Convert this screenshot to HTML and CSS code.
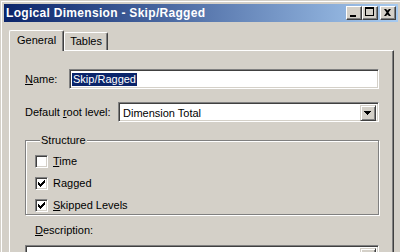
FILE: index.html
```html
<!DOCTYPE html>
<html lang="en">
<head>
  <meta charset="UTF-8">
  <title>Logical Dimension - Skip/Ragged</title>
  <link rel="stylesheet" href="styles.css">
</head>
<body>
  <div class="window">
    <div class="frame">
      <div class="titlebar">
        <span class="title">Logical Dimension - Skip/Ragged</span>
        <div class="title-buttons">
          <span class="tbtn">
            <svg width="14" height="12" viewBox="0 0 14 12"><path d="M3 8h6v2h-6z" fill="#000"/></svg>
          </span>
          <span class="tbtn">
            <svg width="14" height="12" viewBox="0 0 14 12"><path d="M2 0h9v9h-9z M3 2v6h7v-6z" fill="#000" fill-rule="evenodd"/></svg>
          </span>
          <span class="tbtn close">
            <svg width="14" height="12" viewBox="0 0 14 12"><path d="M3 2h2l1.5 1.5l1.5-1.5h2l-2.5 3.5l2.5 3.5h-2l-1.5-1.5l-1.5 1.5h-2l2.5-3.5z" fill="#000"/></svg>
          </span>
        </div>
      </div>

      <div class="content">
        <div class="tabs">
          <div class="tab active">General</div>
          <div class="tab">Tables</div>
        </div>

        <div class="panel">
          <div class="row">
            <span class="label name-label"><u>N</u>ame:</span>
            <div class="field"><span class="selected">Skip/Ragged</span></div>
          </div>

          <div class="row root-row">
            <span class="label root-label">Default <u>r</u>oot level:</span>
            <div class="field combo">
              <span class="combo-text">Dimension Total</span>
              <span class="arrow-btn">
                <svg width="12" height="12" viewBox="0 0 12 12"><path d="M2 4h7v1h-1v1h-1v1h-1v1h-1v-1h-1v-1h-1v-1h-1z" fill="#000"/></svg>
              </span>
            </div>
          </div>

          <fieldset class="group">
            <legend>Structure</legend>
            <div class="check-row">
              <span class="check"></span>
              <span><u>T</u>ime</span>
            </div>
            <div class="check-row">
              <span class="check">
                <svg width="9" height="9" viewBox="0 0 9 9"><path d="M1 3h1v3h-1z M2 4h1v3h-1z M3 5h1v3h-1z M4 4h1v3h-1z M5 3h1v3h-1z M6 2h1v3h-1z M7 1h1v3h-1z" fill="#000"/></svg>
              </span>
              <span>Ragged</span>
            </div>
            <div class="check-row">
              <span class="check">
                <svg width="9" height="9" viewBox="0 0 9 9"><path d="M1 3h1v3h-1z M2 4h1v3h-1z M3 5h1v3h-1z M4 4h1v3h-1z M5 3h1v3h-1z M6 2h1v3h-1z M7 1h1v3h-1z" fill="#000"/></svg>
              </span>
              <span><u>S</u>kipped Levels</span>
            </div>
          </fieldset>

          <div class="desc-label"><u>D</u>escription:</div>
          <div class="field textarea">
            <span class="arrow-btn up">
              <svg width="12" height="12" viewBox="0 0 12 12"><path d="M5 4h1v1h1v1h1v1h1v1h-7v-1h1v-1h1v-1h1z" fill="#000"/></svg>
            </span>
          </div>
        </div>
      </div>
    </div>
  </div>
</body>
</html>
```

FILE: styles.css
```css
body {
  margin: 0;
  background-color: #d4d0c8;
  font-family: "Liberation Sans", Arial, sans-serif;
  font-size: 11px;
  color: #000;
  overflow: hidden;
}

.window {
  height: 252px;
  border-top: 1px solid #d4d0c8;
  border-left: 1px solid #d4d0c8;
  box-sizing: border-box;
  overflow: hidden;
}

.frame {
  height: 100%;
  border-top: 1px solid #fff;
  border-left: 1px solid #fff;
  padding: 2px 2px 0 2px;
  box-sizing: border-box;
}

.titlebar {
  height: 18px;
  display: flex;
  align-items: center;
  justify-content: space-between;
  padding: 0 2px 0 2px;
  background: linear-gradient(to right, #0a246a, #a6caf0);
}

.title {
  color: #fff;
  font-weight: bold;
  font-size: 12px;
  letter-spacing: 0.3px;
  line-height: 18px;
}

.title-buttons {
  display: flex;
}

.tbtn {
  width: 16px;
  height: 14px;
  box-sizing: border-box;
  border: 1px solid;
  border-color: #fff #404040 #404040 #fff;
  box-shadow: inset -1px -1px #808080;
  background-color: #d4d0c8;
  display: flex;
}

.tbtn svg {
  display: block;
}

.tbtn.close {
  margin-left: 2px;
}

.content {
  padding: 8px 4px 0 5px;
}

.tabs {
  display: flex;
  align-items: flex-end;
  height: 20px;
  position: relative;
  z-index: 1;
}

.tab {
  height: 17px;
  line-height: 17px;
  padding: 0 5px;
  border: 1px solid;
  border-bottom: 0;
  border-color: #fff #404040 #404040 #fff;
  box-shadow: inset -1px 0 #808080;
  border-radius: 2px 2px 0 0;
  background-color: #d4d0c8;
}

.tab.active {
  height: 20px;
  line-height: 18px;
  padding: 0 7px;
  margin-bottom: -1px;
}

.panel {
  height: 220px;
  border: 1px solid;
  border-color: #fff #404040 #404040 #fff;
  box-shadow: inset -1px -1px #808080;
  padding: 18px 14px 0 15px;
  box-sizing: border-box;
}

.row {
  display: flex;
  align-items: center;
}

.label {
  flex: none;
}

.name-label {
  width: 44px;
}

.root-label {
  width: 93px;
}

.root-row {
  margin-top: 13px;
}

.field {
  flex: 1;
  height: 20px;
  box-sizing: border-box;
  border: 1px solid;
  border-color: #808080 #fff #fff #808080;
  box-shadow: inset 1px 1px #404040, inset -1px -1px #d4d0c8;
  background-color: #fff;
  padding: 2px 2px 0 2px;
  display: flex;
  align-items: flex-start;
}

.selected {
  background-color: #0a246a;
  color: #fff;
  line-height: 13px;
  padding: 0 1px;
  margin-top: 1px;
}

.combo {
  justify-content: space-between;
}

.combo-text {
  line-height: 14px;
  padding: 1px 0 0 2px;
}

.arrow-btn {
  width: 16px;
  height: 16px;
  box-sizing: border-box;
  border: 1px solid;
  border-color: #d4d0c8 #404040 #404040 #d4d0c8;
  box-shadow: inset 1px 1px #fff, inset -1px -1px #808080;
  background-color: #d4d0c8;
  display: flex;
  align-items: center;
  justify-content: center;
}

.group {
  margin: 12px 0 0 0;
  padding: 8px 8px 2px 9px;
  min-inline-size: 0;
  border: 1px solid #808080;
  box-shadow: 1px 1px 0 #fff, inset 1px 1px 0 #fff;
}

.group legend {
  padding: 0 1px;
  margin-left: 5px;
  line-height: 13px;
  background-color: #d4d0c8;
}

.check-row {
  display: flex;
  align-items: center;
  gap: 5px;
  height: 13px;
  line-height: 13px;
  margin-bottom: 9px;
}

.check-row:last-child {
  margin-bottom: 0;
}

.check {
  width: 13px;
  height: 13px;
  box-sizing: border-box;
  border: 1px solid;
  border-color: #808080 #fff #fff #808080;
  box-shadow: inset 1px 1px #404040, inset -1px -1px #d4d0c8;
  background-color: #fff;
  display: flex;
  align-items: center;
  justify-content: center;
}

.check svg {
  display: block;
}

.desc-label {
  margin-top: 9px;
  padding-left: 10px;
  line-height: 13px;
}

.textarea {
  margin-top: 8px;
  height: 40px;
  justify-content: flex-end;
}
```
